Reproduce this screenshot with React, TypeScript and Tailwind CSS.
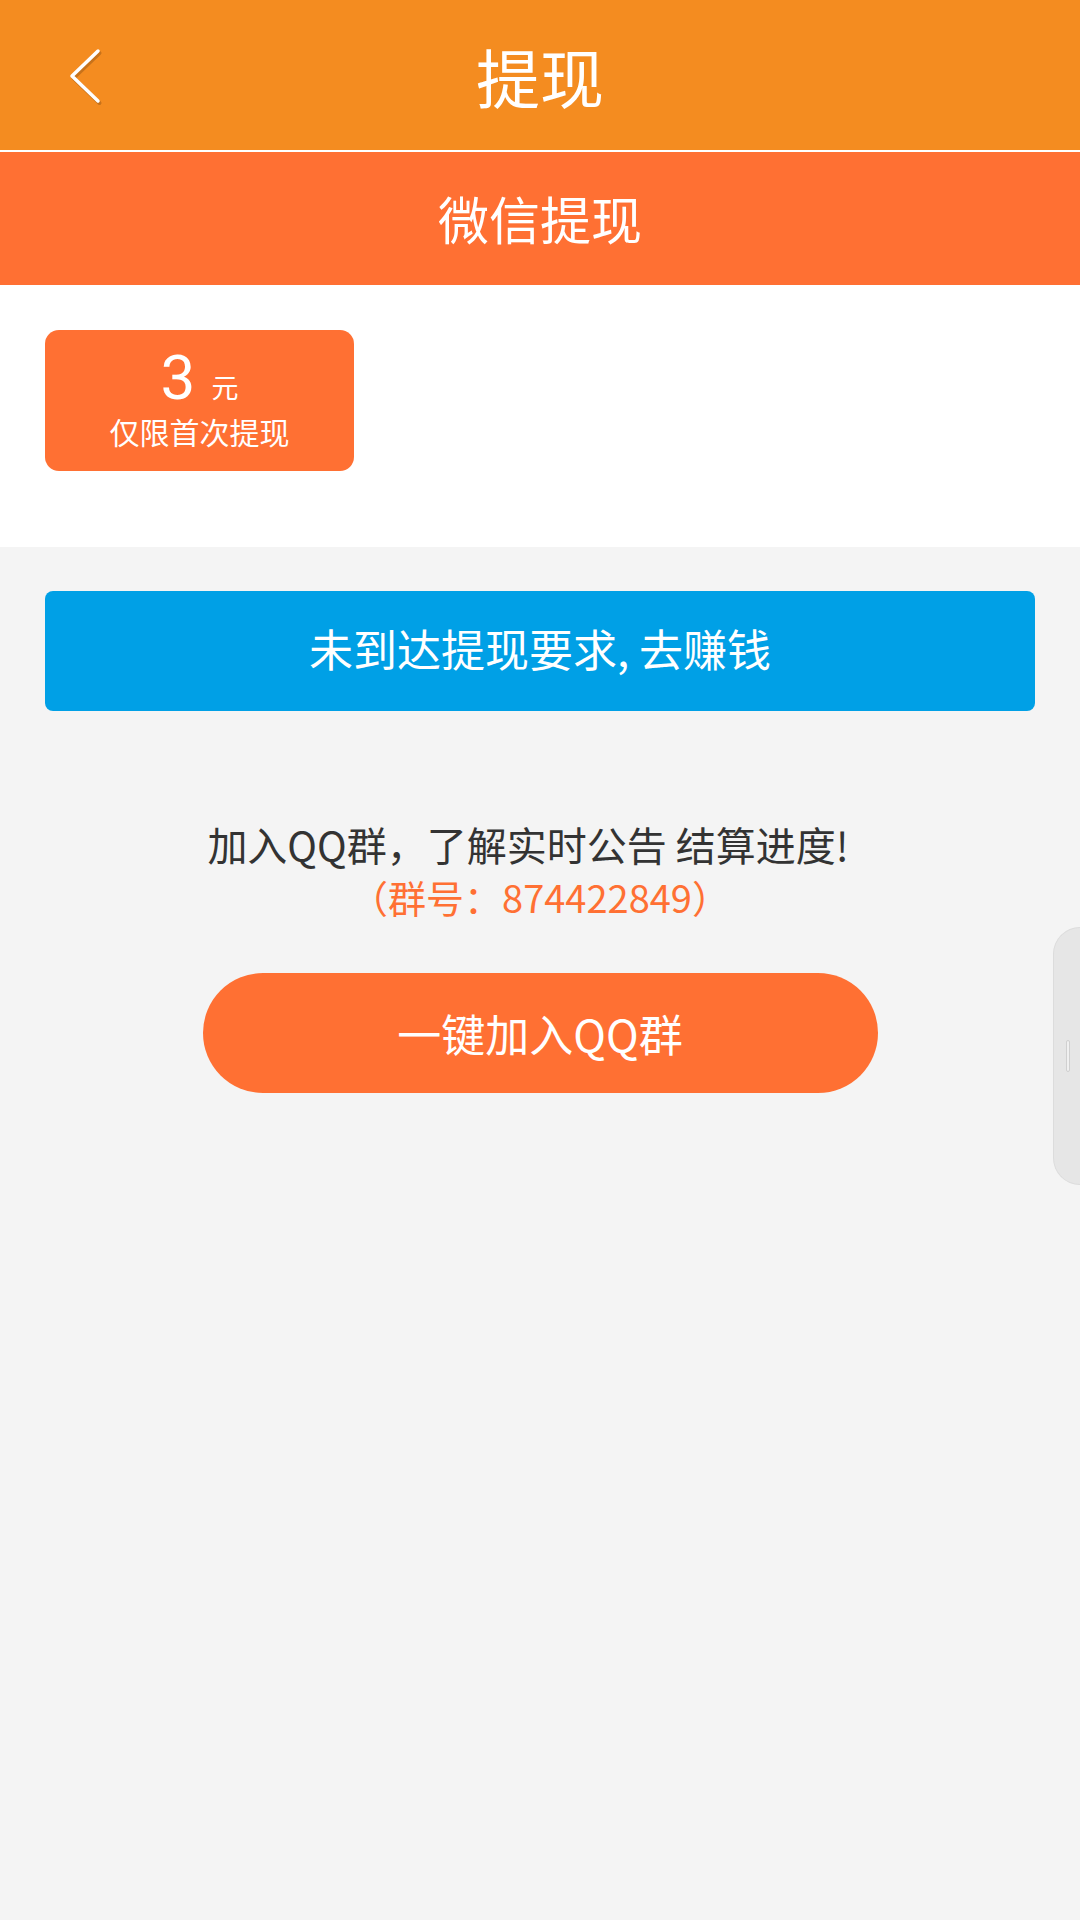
import React from 'react';

const cjk = { fontFamily: '"Noto Sans CJK SC", "Noto Sans", sans-serif' };

const BackIcon = () => (
  <svg width="44" height="64" viewBox="0 0 44 64" fill="none">
    <path d="M32 7 L6 32 L32 57" stroke="rgba(0,0,0,0.18)" strokeWidth="4" strokeLinecap="round" strokeLinejoin="round" transform="translate(1.5,2)" />
    <path d="M32 7 L6 32 L32 57" stroke="#ffffff" strokeWidth="3.5" strokeLinecap="round" strokeLinejoin="round" />
  </svg>
);

export default function App() {
  return (
    <div className="relative min-h-[1920px] w-[1080px] bg-[#f4f4f4] overflow-hidden" style={cjk}>
      {/* title bar */}
      <div className="grid h-[150px] grid-cols-[1fr_auto_1fr] items-center bg-[#f48c20]">
        <div className="pl-[66px] pt-[2px]">
          <BackIcon />
        </div>
        <h1 className="text-[64px] leading-none text-white">提现</h1>
        <div />
      </div>
      <div className="h-[2px] bg-white" />

      {/* tab band */}
      <div className="flex h-[133px] items-center justify-center bg-[#ff7033]">
        <span className="text-[51px] leading-none text-white">微信提现</span>
      </div>

      {/* amount options */}
      <div className="h-[262px] bg-white px-[45px] pt-[45px]">
        <div className="flex h-[141px] w-[309px] flex-col items-center rounded-[14px] bg-[#ff7033] pt-[25px] text-white">
          <div className="flex h-[46px] items-end gap-[16px]">
            <span className="text-[62px] leading-[46px]" style={{ fontFamily: '"Roboto", "Noto Sans", sans-serif' }}>3</span>
            <span className="text-[27px] leading-[28px]">元</span>
          </div>
          <span className="mt-[14px] text-[30px] leading-[32px]">仅限首次提现</span>
        </div>
      </div>

      {/* actions */}
      <div className="px-[45px] pt-[44px]">
        <button className="flex h-[120px] w-full items-center justify-center rounded-[8px] bg-[#00a0e6] pb-[6px] text-[44px] text-white">
          未到达提现要求, 去赚钱
        </button>
      </div>

      <div className="mt-[106px] flex flex-col items-center">
        <p className="pr-[24px] text-[40px] leading-[54px] text-[#333333]">加入QQ群，了解实时公告 结算进度!</p>
        <p className="text-[38px] leading-[52px] text-[#ff7033]">（群号：874422849）</p>
        <button className="mt-[50px] flex h-[120px] w-[675px] items-center justify-center rounded-full bg-[#ff7033] text-[44px] text-white">
          一键加入QQ群
        </button>
      </div>

      {/* floating edge handle */}
      <div className="absolute right-0 top-[927px] flex h-[258px] w-[27px] items-center rounded-l-[40px] border border-r-0 border-[#dcdcdc] bg-[#e6e6e6] pl-[12px]">
        <div className="h-[32px] w-[4px] rounded-full border border-[#d0d0d0] bg-[#f0f0f0]" />
      </div>
    </div>
  );
}
